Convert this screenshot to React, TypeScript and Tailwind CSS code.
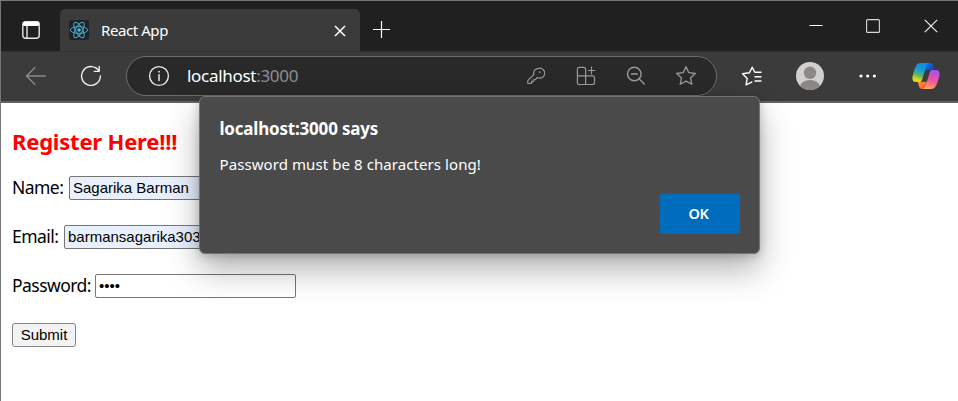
import type { ReactNode } from "react";

const stroke = { fill: "none", strokeLinecap: "round", strokeLinejoin: "round" } as const;

function TabStrip() {
  return (
    <div className="flex h-[50px] bg-[#202020] text-white">
      <div className="flex h-[50px] w-[59px] items-center justify-center bg-[#202020] pt-[8px]">
        <svg width="18" height="18" viewBox="0 0 18 18" {...stroke} stroke="#e8e8e8" strokeWidth="1.4">
          <rect x="0.8" y="0.8" width="16.4" height="16.4" rx="2.6" />
          <path d="M1.5 3.6h15M1 2.5h16" stroke="#fff" strokeWidth="3" strokeLinecap="butt" />
          <path d="M5 5v12" />
        </svg>
      </div>
      <div className="mt-[8px] flex h-[42px] w-[300px] items-center rounded-t-[5px] bg-[#3b3b3b] pl-[9px]">
        <div className="flex size-[20px] items-center justify-center rounded-[3px] bg-[#202225]">
          <svg width="20" height="20" viewBox="0 0 20 20" fill="none" stroke="#46a9c4" strokeWidth="1">
            <circle cx="10" cy="10" r="1.3" fill="#61dafb" />
            <ellipse cx="10" cy="10" rx="8.7" ry="3.4" />
            <ellipse cx="10" cy="10" rx="8.7" ry="3.4" transform="rotate(60 10 10)" />
            <ellipse cx="10" cy="10" rx="8.7" ry="3.4" transform="rotate(120 10 10)" />
          </svg>
        </div>
        <span className="ml-[12px] w-[228px] whitespace-nowrap pb-px font-['Noto_Sans','Open_Sans',sans-serif] text-[15px] leading-[20px] tracking-[-0.42px]">React App</span>
        <svg width="12" height="12" viewBox="0 0 12 12" stroke="#fff" strokeWidth="1.5" className="relative top-px ml-[5px]">
          <path d="M1 1l10 10M11 1L1 11" />
        </svg>
      </div>
      <div className="flex w-[40px] items-center justify-center bg-[#202020] pt-[7px] pl-[3px]">
        <svg width="18" height="18" viewBox="0 0 18 18" stroke="#fff" strokeWidth="1.2">
          <path d="M8.5 0v17M0 8.5h17" />
        </svg>
      </div>
      <div className="ml-auto flex h-[50px] items-center pr-[20px]">
        <svg width="14" height="14" viewBox="0 0 14 14" stroke="#fff" strokeWidth="1"><path d="M0.5 6.5h13" /></svg>
        <svg width="14" height="14" viewBox="0 0 14 14" fill="none" stroke="#d8d8d8" strokeWidth="1.1" className="ml-[43px]"><rect x="0.6" y="0.6" width="12.8" height="12.8" rx="1" /></svg>
        <svg width="14" height="14" viewBox="0 0 14 14" stroke="#eee" strokeWidth="1.2" className="ml-[44px]"><path d="M0.8 0.8l12.4 12.4M13.2 0.8L0.8 13.2" /></svg>
      </div>
    </div>
  );
}

function AddressBar() {
  return (
    <div className="flex h-[40px] w-[591px] items-center rounded-full border border-[#6c6c6c] bg-[#292929] pl-[21px]">
      <svg width="22" height="22" viewBox="0 0 22 22" {...stroke} stroke="#e8e8e8" strokeWidth="1.4">
        <circle cx="11" cy="11" r="9.4" />
        <path d="M11 9.8v5.6" strokeWidth="1.5" />
        <circle cx="11" cy="6.8" r="0.5" fill="#e8e8e8" strokeWidth="0.8" />
      </svg>
      <span className="ml-[17px] w-[334px] whitespace-nowrap font-['Noto_Sans','Open_Sans',sans-serif] text-[17px] leading-[24px] tracking-[-0.3px] text-white">
        localhost<span className="text-[#8f8f8f]">:3000</span>
      </span>
      <svg width="18" height="18" viewBox="0 0 18 18" {...stroke} stroke="#9a9a9a" strokeWidth="1.2" className="ml-[6px]">
        <path d="M11.7 1.3a5 5 0 0 0-4.9 6.3L1.2 13.2c-.3.3-.4.6-.4 1v2.3h3.6v-1.8h1.8v-1.9H8l2.2-2.3a5 5 0 1 0 1.5-9.2Z" />
        <circle cx="12.8" cy="5.1" r="0.9" fill="#9a9a9a" stroke="none" />
      </svg>
      <svg width="20" height="20" viewBox="0 0 20 20" {...stroke} stroke="#9a9a9a" strokeWidth="1.2" className="ml-[31px]">
        <path d="M9.6 10V3.2a1.8 1.8 0 0 0-1.8-1.8H3.2a1.8 1.8 0 0 0-1.8 1.8v13.5a1.8 1.8 0 0 0 1.8 1.8h13.5a1.8 1.8 0 0 0 1.8-1.8v-5a1.8 1.8 0 0 0-1.8-1.8H1.4M9.6 10v8.5M15.5 1.2v6.6M12.2 4.5h6.6" />
      </svg>
      <svg width="20" height="20" viewBox="0 0 20 20" {...stroke} stroke="#9a9a9a" strokeWidth="1.4" className="ml-[30px]">
        <circle cx="8.3" cy="8" r="6.8" /><path d="M13.2 13l5.1 5.1M5.3 8h6" />
      </svg>
      <svg width="22" height="22" viewBox="0 0 22 22" {...stroke} stroke="#9a9a9a" strokeWidth="1.3" className="ml-[29px]">
        <path d="M11 1.7l2.8 6 6.5.8-4.8 4.4 1.3 6.4-5.8-3.2-5.8 3.2 1.3-6.4L1.7 8.5l6.5-.8z" />
      </svg>
    </div>
  );
}

function CopilotLogo() {
  return (
    <svg width="28" height="26" viewBox="0 0 28 26">
      <defs>
        <linearGradient id="cool" x1="0.6" y1="0" x2="0.3" y2="1">
          <stop offset="0" stopColor="#1489ea" /><stop offset="0.4" stopColor="#1c9ccb" /><stop offset="0.65" stopColor="#55b86c" /><stop offset="0.9" stopColor="#e8d614" />
        </linearGradient>
        <linearGradient id="warm" x1="0.65" y1="0" x2="0.35" y2="1">
          <stop offset="0" stopColor="#a252ee" /><stop offset="0.5" stopColor="#ee52a5" /><stop offset="1" stopColor="#ffa35a" />
        </linearGradient>
        <linearGradient id="blue" x1="0" y1="0" x2="1" y2="1">
          <stop offset="0" stopColor="#0877e8" /><stop offset="1" stopColor="#123fc7" />
        </linearGradient>
        <linearGradient id="orange" x1="0" y1="0" x2="1" y2="1">
          <stop offset="0" stopColor="#ffa043" /><stop offset="1" stopColor="#f04c39" />
        </linearGradient>
      </defs>
      <path d="M14 0h4c2 0 2.6 1.3 3.1 3l1 4H18c-2 0-3.6-.6-4.6 1z" fill="url(#blue)" />
      <path d="M14 26h-4c-2 0-2.6-1.3-3.1-3l-1.1-4.3H10c2 0 3.6.6 4.6-1z" fill="url(#orange)" />
      <path d="M18 0H8.5C4.8 0 3.2 4.2 1.7 9 .3 13.7-1 19 4 19h3.5c1.7 0 2.4-1.2 2.9-2.9L14 4.5C14.6 1.8 16 0 18 0z" fill="url(#cool)" />
      <path d="M10 26h9.5c3.7 0 5.3-4.2 6.8-9C27.7 12.3 29 7 24 7h-3.5c-1.7 0-2.4 1.2-2.9 2.9L14 21.5c-.6 2.7-2 4.5-4 4.5z" fill="url(#warm)" />
    </svg>
  );
}

function Toolbar() {
  return (
    <div className="flex h-[52px] items-center border-b-2 border-[#626262] bg-[#3b3b3b] pl-[24px] shadow-[inset_0_1px_0_#333]">
      <svg width="22" height="20" viewBox="0 0 22 20" {...stroke} stroke="#8b8b8b" strokeWidth="1.3">
        <path d="M20.5 10H1.8M10 1.5L1.5 10l8.5 8.5" />
      </svg>
      <svg width="22" height="22" viewBox="0 0 22 22" {...stroke} stroke="#f2f2f2" strokeWidth="1.35" className="ml-[33px]">
        <path d="M19 6A9.4 9.4 0 1 0 20.4 11M19.2 1.3v5h-5" />
      </svg>
      <div className="ml-[24px]"><AddressBar /></div>
      <svg width="22" height="20" viewBox="0 0 22 20" {...stroke} stroke="#fff" strokeWidth="1.4" className="ml-[24px]">
        <path d="M20 6.3h-6.2l-2.6-5-2.8 5.5-6.9.9 4.7 4.7-1.1 6.5 5.6-2.8M14 10.7h6M14 15h6" />
      </svg>
      <div className="ml-[33px] size-[28px] overflow-hidden rounded-full bg-[#d2d0ce]">
        <svg width="28" height="28" viewBox="0 0 28 28" fill="#8b8885"><circle cx="14" cy="10.8" r="6.2" /><ellipse cx="14" cy="25" rx="10" ry="7" /></svg>
      </div>
      <svg width="18" height="4" viewBox="0 0 18 4" fill="#fff" className="ml-[35px]">
        <circle cx="2" cy="2" r="1.6" /><circle cx="8.7" cy="2" r="1.6" /><circle cx="15.4" cy="2" r="1.6" />
      </svg>
      <div className="ml-[35px]"><CopilotLogo /></div>
    </div>
  );
}

function Row({ label, children }: { label: ReactNode; children: ReactNode }) {
  return (
    <label className="mb-[25px] flex h-[24px] items-center">
      {label}
      {children}
    </label>
  );
}

const field =
  "h-[24px] w-[201px] rounded-[2px] border border-[#767676] pl-[3px] pr-[4px] pb-[2px] font-['Liberation_Sans',Arial,sans-serif] text-[15px] leading-[18px] tracking-normal outline-none";

function RegisterForm() {
  return (
    <div className="flex-1 bg-white pl-[11px] font-['Noto_Sans','Open_Sans',sans-serif] text-black">
      <h2 className="pt-[23px] text-[22px] leading-[30px] font-bold tracking-[-0.2px] text-[#ff0000]">Register Here!!!</h2>
      <form className="pt-[20px] text-[17.5px] leading-[24px] tracking-[-0.55px] whitespace-nowrap">
        <Row label={<span className="w-[57px] pb-[3px]">Name:</span>}><input className={`${field} bg-[#e8f0fe]`} defaultValue="Sagarika Barman" /></Row>
        <Row label={<span className="w-[52px] pb-[3px]">Email:</span>}><input className={`${field} bg-[#e8f0fe]`} defaultValue="barmansagarika303@gmail.com" /></Row>
        <Row label={<span className="w-[83px] pb-[3px]">Password:</span>}><input type="password" className={`${field} bg-white`} defaultValue="1234" /></Row>
        <button type="button" className="flex h-[24px] w-[64px] items-center justify-center rounded-[3px] border border-[#858585] bg-[#f3f3f3] font-['Liberation_Sans',Arial,sans-serif] text-[15px] tracking-normal">Submit</button>
      </form>
    </div>
  );
}

function AlertDialog() {
  return (
    <div className="absolute top-[96px] left-[199px] flex h-[158px] w-[561px] flex-col rounded-[6px] border border-[#747474] bg-[#4a4a4a] pr-[19px] pl-[19.5px] font-['Noto_Sans','Open_Sans',sans-serif] text-white shadow-[0_16px_32px_rgba(0,0,0,0.3),0_2px_10px_rgba(0,0,0,0.2)]">
      <p className="mt-[20px] text-[17px] leading-[24px] font-bold tracking-[-0.2px]">localhost:3000 says</p>
      <p className="mt-[13px] text-[15px] leading-[20px] tracking-[0.08px]">Password must be 8 characters long!</p>
      <button className="mt-[20px] ml-auto h-[40px] w-[80px] rounded-[2px] bg-[#006cbe] pr-[3px] text-[14.5px] font-semibold tracking-[-0.3px]">OK</button>
    </div>
  );
}

export default function App() {
  return (
    <div className="relative flex h-[401px] w-[958px] flex-col overflow-hidden border-t border-l border-[#777777] bg-white">
      <TabStrip />
      <Toolbar />
      <RegisterForm />
      <div className="absolute -top-px -left-px"><AlertDialog /></div>
    </div>
  );
}
